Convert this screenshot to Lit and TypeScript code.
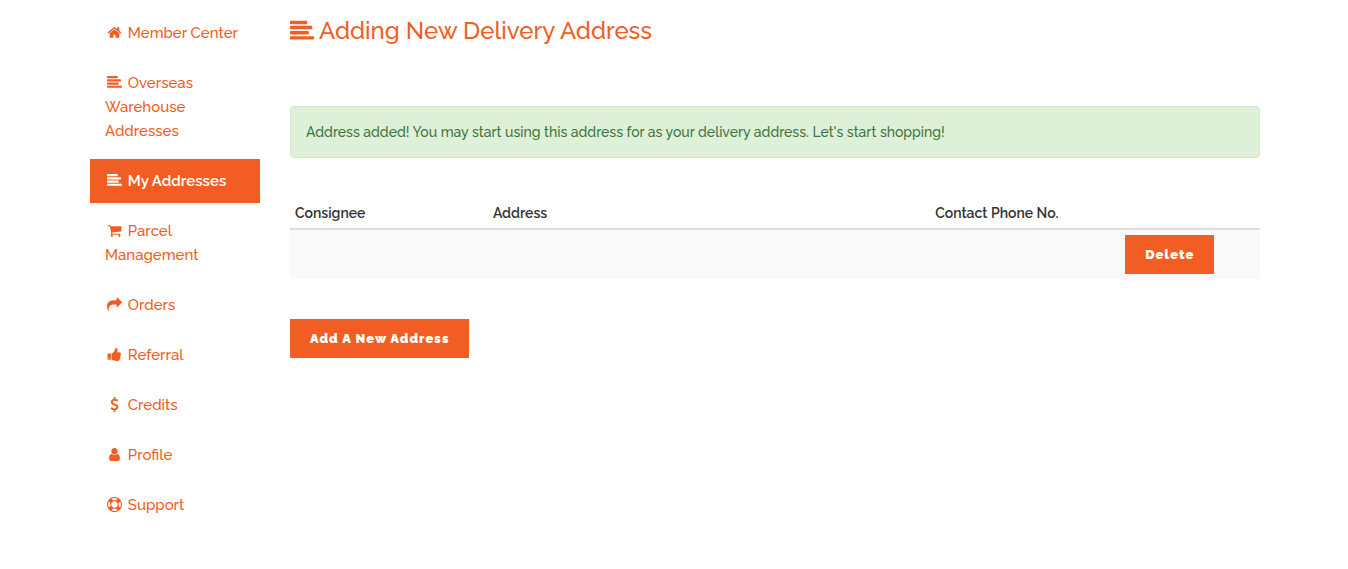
import { LitElement, html, svg, css } from "lit";
import { customElement, property, state } from "lit/decorators.js";

const ICONS: Record<string, string> = {
  home: "M1472 992v480q0 26-19 45t-45 19h-384v-384h-256v384h-384q-26 0-45-19t-19-45v-480q0-1 .5-3t.5-3l575-474 575 474q1 2 1 6zm223-69l-62 74q-8 9-21 11h-3q-13 0-21-7l-692-577-692 577q-12 8-24 7-13-2-21-11l-62-74q-8-10-7-23.5t11-21.5l719-599q32-26 76-26t76 26l244 204v-195q0-14 9-23t23-9h192q14 0 23 9t9 23v408l219 182q10 8 11 21.5t-7 23.5z",
  list: "M1792 1344v128q0 26-19 45t-45 19h-1664q-26 0-45-19t-19-45v-128q0-26 19-45t45-19h1664q26 0 45 19t19 45zm-384-384v128q0 26-19 45t-45 19h-1280q-26 0-45-19t-19-45v-128q0-26 19-45t45-19h1280q26 0 45 19t19 45zm256-384v128q0 26-19 45t-45 19h-1536q-26 0-45-19t-19-45v-128q0-26 19-45t45-19h1536q26 0 45 19t19 45zm-384-384v128q0 26-19 45t-45 19h-1152q-26 0-45-19t-19-45v-128q0-26 19-45t45-19h1152q26 0 45 19t19 45z",
  cart: "M704 1536q0 52-38 90t-90 38-90-38-38-90 38-90 90-38 90 38 38 90zm896 0q0 52-38 90t-90 38-90-38-38-90 38-90 90-38 90 38 38 90zm128-1088v512q0 24-16.5 42.5t-40.5 21.5l-1044 122q13 60 13 70 0 16-24 64h920q26 0 45 19t19 45-19 45-45 19h-1024q-26 0-45-19t-19-45q0-11 8-31.5t16-36 21.5-40 15.5-29.5l-177-823h-204q-26 0-45-19t-19-45 19-45 45-19h256q16 0 28.5 6.5t19.5 15.5 13 24.5 8 26 5.5 29.5 4.5 26h1201q26 0 45 19t19 45z",
  share: "M1792 640q0 26-19 45l-512 512q-19 19-45 19t-45-19-19-45v-256h-224q-98 0-175.5 6t-154 21.5-133 42.5-105.5 69.5-80 101-48.5 138.5-17.5 181q0 55 5 123 0 6 2.5 23.5t2.5 26.5q0 15-8.5 25t-23.5 10q-16 0-28-17-7-9-13-22t-13.5-30-10.5-24q-127-285-127-451 0-199 53-333 162-403 875-403h224v-256q0-26 19-45t45-19 45 19l512 512q19 19 19 45z",
  thumb: "M320 1344q0-26-19-45t-45-19q-27 0-45.5 19t-18.5 45q0 27 18.5 45.5t45.5 18.5q26 0 45-18.5t19-45.5zm160-512v640q0 26-19 45t-45 19h-288q-26 0-45-19t-19-45v-640q0-26 19-45t45-19h288q26 0 45 19t19 45zm1184 0q0 86-55 149 15 44 15 76 3 76-43 137 17 56 0 117-15 57-54 94 9 112-49 181-64 76-197 78h-129q-66 0-144-15.5t-121.5-29-120.5-39.5q-123-43-158-44-26-1-45-19.5t-19-44.5v-641q0-25 18-43.5t43-20.5q24-2 76-59t101-121q68-87 101-120 18-18 31-48t17.5-48.5 13.5-60.5q7-39 12.5-61t19.5-52 34-50q19-19 45-19 46 0 82.5 10.5t60 26 40 40.5 24 45 12 50 5 45 .5 39q0 38-9.5 76t-19 60-27.5 56q-3 6-10 18t-11 22-8 24h277q78 0 135 57t57 135z",
  dollar: "M1362 1185q0 153-99.5 263.5t-258.5 136.5v175q0 14-9 23t-23 9h-135q-13 0-22.5-9.5t-9.5-22.5v-175q-66-9-127.5-31t-101.5-44.5-74-48-46.5-37.5-17.5-18q-17-21-2-41l103-135q7-10 23-12 15-2 24 9l2 2q113 99 243 125 37 8 74 8 81 0 142.5-43t61.5-122q0-28-15-53t-33.5-42-58.5-37.5-66-32-80-32.5q-39-16-61.5-25t-61.5-26.5-62.5-31-56.5-35.5-53.5-42.5-43.5-49-35.5-58-21-66.5-8.5-78q0-138 98-242t255-134v-180q0-13 9.5-22.5t22.5-9.5h135q14 0 23 9t9 23v176q57 6 110.5 23t87 33.5 63.5 37.5 39 29 15 14q17 18 5 38l-81 146q-8 15-23 16-14 3-27-7-3-3-14.5-12t-39-26.5-58.5-32-74.5-26-85.5-11.5q-95 0-155 43t-60 111q0 26 8.5 48t29.5 41.5 39.5 33 56 31 60.5 27 70 27.5q53 20 81 31.5t76 35 75.5 42.5 62 50 53 63.5 31.5 76.5 13 94z",
  user: "M1536 1399q0 109-62.5 187t-150.5 78h-854q-88 0-150.5-78t-62.5-187q0-85 8.5-160.5t31.5-152 58.5-131 94-89 134.5-34.5q131 128 313 128t313-128q76 0 134.5 34.5t94 89 58.5 131 31.5 152 8.5 160.5zm-256-887q0 159-112.5 271.5t-271.5 112.5-271.5-112.5-112.5-271.5 112.5-271.5 271.5-112.5 271.5 112.5 112.5 271.5z",
  ring: "M896 0q182 0 348 71t286 191 191 286 71 348-71 348-191 286-286 191-348 71-348-71-286-191-191-286-71-348 71-348 191-286 286-191 348-71zm0 128q-190 0-361 90l194 194q82-28 167-28t167 28l194-194q-171-90-361-90zm-678 1129l194-194q-28-82-28-167t28-167l-194-194q-90 171-90 361t90 361zm678 407q190 0 361-90l-194-194q-82 28-167 28t-167-28l-194 194q171 90 361 90zm0-384q159 0 271.5-112.5t112.5-271.5-112.5-271.5-271.5-112.5-271.5 112.5-112.5 271.5 112.5 271.5 271.5 112.5zm484-217l194 194q90-171 90-361t-90-361l-194 194q28 82 28 167t-28 167z",
};

@customElement("ui-icon")
class UiIcon extends LitElement {
  @property() name = "home";

  static styles = css`
    :host {
      display: inline-block;
    }
    .glyph {
      display: block;
      width: 100%;
      height: 100%;
      fill: currentColor;
    }
  `;

  render() {
    return html`<svg class="glyph" viewBox="0 0 1792 1792" aria-hidden="true">
      ${svg`<path d=${ICONS[this.name]}></path>`}
    </svg>`;
  }
}

const LINKS = [
  { icon: "home", label: "Member Center" },
  { icon: "list", label: "Overseas Warehouse Addresses" },
  { icon: "list", label: "My Addresses" },
  { icon: "cart", label: "Parcel Management" },
  { icon: "share", label: "Orders" },
  { icon: "thumb", label: "Referral" },
  { icon: "dollar", label: "Credits" },
  { icon: "user", label: "Profile" },
  { icon: "ring", label: "Support" },
];

@customElement("app-root")
class AppRoot extends LitElement {
  @state() current = "My Addresses";

  static styles = css`
    :host {
      display: block;
      box-sizing: border-box;
      padding: 11px 15px 16px 17px;
      background: #fff;
      color: #333;
      font: 500 14px/20px Raleway, Lato, sans-serif;
    }
    .page {
      display: grid;
      grid-template-columns: 170px minmax(0, 1fr);
      gap: 30px;
      max-width: 1170px;
      margin: 0 auto;
    }
    .menu {
      display: flex;
      flex-direction: column;
      gap: 6px;
    }
    .link {
      display: block;
      padding: 10px 15px;
      color: #f15d22;
      font-size: 15px;
      line-height: 24px;
      text-decoration: none;
    }
    .link.active {
      background: #f15d22;
      color: #fff;
      font-weight: 600;
    }
    .link-icon {
      width: 15px;
      height: 15px;
      margin: 0 2px 0 2px;
      vertical-align: -2px;
    }
    .title {
      display: flex;
      align-items: center;
      gap: 5px;
      margin: 4px 0 60px;
      color: #f15d22;
      font-size: 24px;
      line-height: 31px;
      font-weight: 500;
    }
    .title-icon {
      width: 24px;
      height: 24px;
    }
    .notice {
      margin-bottom: 40px;
      padding: 15px;
      border: 1px solid #d6e9c6;
      border-radius: 4px;
      background: #dff0d8;
      color: #3c763d;
    }
    .table {
      width: 100%;
      margin-bottom: 40px;
      border-collapse: separate;
      border-spacing: 0;
      table-layout: fixed;
    }
    .col-name {
      width: 20.4%;
    }
    .col-address {
      width: 45.6%;
    }
    .col-phone {
      width: 19.6%;
    }
    .head {
      padding: 5px;
      border-bottom: 2px solid #ddd;
      text-align: left;
      font-weight: 600;
    }
    .cell {
      padding: 5px;
      background: #f9f9f9;
    }
    .button {
      display: block;
      padding: 0 20px;
      border: 0;
      background: #f15d22;
      color: #fff;
      font: 900 13px/39px Raleway, Inter, sans-serif;
      letter-spacing: 1px;
      cursor: pointer;
    }
  `;

  render() {
    return html`
      <div class="page">
        <nav class="menu" aria-label="Account">
          ${LINKS.map(
            (link) => html`<a
              class="link ${link.label === this.current ? "active" : ""}"
              href="#"
              @click=${(e: Event) => {
                e.preventDefault();
                this.current = link.label;
              }}
              ><ui-icon class="link-icon" name=${link.icon}></ui-icon> ${link.label}</a
            >`
          )}
        </nav>
        <main>
          <h1 class="title"><ui-icon class="title-icon" name="list"></ui-icon>Adding New Delivery Address</h1>
          <div class="notice" role="status">
            Address added! You may start using this address for as your delivery address. Let's start shopping!
          </div>
          <table class="table">
            <colgroup>
              <col class="col-name" />
              <col class="col-address" />
              <col class="col-phone" />
              <col />
            </colgroup>
            <thead>
              <tr>
                <th class="head" scope="col">Consignee</th>
                <th class="head" scope="col">Address</th>
                <th class="head" scope="col">Contact Phone No.</th>
                <td class="head"></td>
              </tr>
            </thead>
            <tbody>
              <tr>
                <td class="cell"></td>
                <td class="cell"></td>
                <td class="cell"></td>
                <td class="cell"><button class="button" type="button">Delete</button></td>
              </tr>
            </tbody>
          </table>
          <button class="button" type="button">Add A New Address</button>
        </main>
      </div>
    `;
  }
}
